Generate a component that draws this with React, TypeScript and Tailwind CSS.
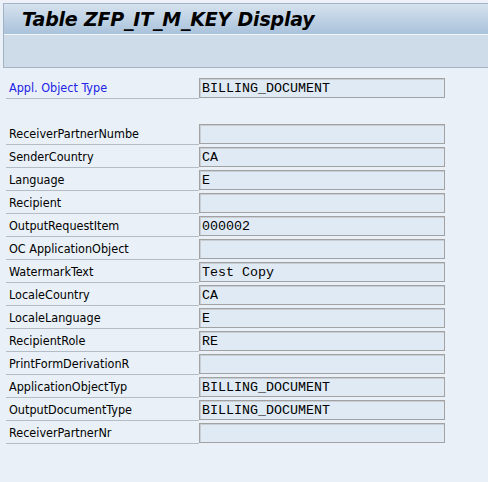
import React from "react";

const rows: [string, string][] = [
  ["ReceiverPartnerNumbe", ""],
  ["SenderCountry", "CA"],
  ["Language", "E"],
  ["Recipient", ""],
  ["OutputRequestItem", "000002"],
  ["OC ApplicationObject", ""],
  ["WatermarkText", "Test Copy"],
  ["LocaleCountry", "CA"],
  ["LocaleLanguage", "E"],
  ["RecipientRole", "RE"],
  ["PrintFormDerivationR", ""],
  ["ApplicationObjectTyp", "BILLING_DOCUMENT"],
  ["OutputDocumentType", "BILLING_DOCUMENT"],
  ["ReceiverPartnerNr", ""],
];

function Row({ label, value, blue }: { label: string; value: string; blue?: boolean }) {
  return (
    <div className="flex h-[23px] items-start">
      <div
        className={`ml-[6px] w-[193px] h-[21px] border-b border-[#b4bcc5] pl-[3px] pt-[1px] flex items-center text-[12.5px] leading-none ${
          blue ? "text-[#2323e6]" : "text-black"
        }`}
        style={{ fontFamily: "'DejaVu Sans Condensed', 'Liberation Sans', sans-serif" }}
      >
        {label}
      </div>
      <div
        className="w-[246px] h-[20px] border border-[#a2a2a2] bg-[#dfeaf5] shadow-[inset_1px_1px_0_#c9ced4] pl-[2px] pt-[1px] flex items-center text-[13.33px] leading-none text-black whitespace-pre"
        style={{ fontFamily: "'Liberation Mono', 'Courier New', monospace" }}
      >
        {value}
      </div>
    </div>
  );
}

export default function App() {
  return (
    <div className="w-[488px] h-[482px] bg-[#e9f0f7] overflow-hidden">
      <div className="h-[3px] bg-[#eef2f8]" />
      <div className="ml-[3px] border-l border-t border-b border-[#a4b3c3]">
        <div className="h-[30px] bg-gradient-to-b from-[#d6e2ee] to-[#a9c2db] flex items-center pl-[18px]">
          <span
            className="text-[19px] font-bold italic text-black tracking-[-0.2px]"
            style={{ fontFamily: "'DejaVu Sans', Verdana, sans-serif" }}
          >
            Table ZFP_IT_M_KEY Display
          </span>
        </div>
        <div className="h-px bg-[#f2f6fa]" />
        <div className="h-[32px] bg-[#cedbe8]" />
      </div>
      <div className="pt-[10px]">
        <Row label="Appl. Object Type" value="BILLING_DOCUMENT" blue />
        <div className="h-[23px]" />
        {rows.map(([l, v]) => (
          <Row key={l} label={l} value={v} />
        ))}
      </div>
    </div>
  );
}
